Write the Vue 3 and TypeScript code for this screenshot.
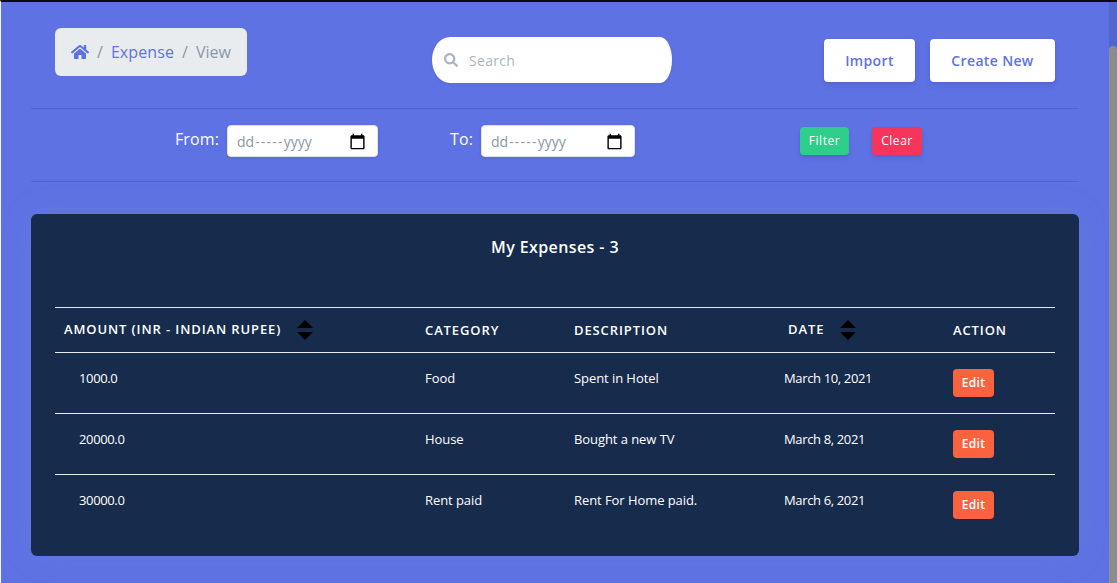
<script setup lang="ts">
interface Expense {
  amount: string
  category: string
  description: string
  date: string
}

const expenses: Expense[] = [
  { amount: '1000.0', category: 'Food', description: 'Spent in Hotel', date: 'March 10, 2021' },
  { amount: '20000.0', category: 'House', description: 'Bought a new TV', date: 'March 8, 2021' },
  { amount: '30000.0', category: 'Rent paid', description: 'Rent For Home paid.', date: 'March 6, 2021' },
]
</script>

<template>
  <div class="window">
    <main class="page">
      <header class="toolbar">
        <nav class="breadcrumb">
          <svg class="home" viewBox="0 0 576 512" aria-hidden="true">
            <path d="M280.4 148.3 96 300.1V464a16 16 0 0 0 16 16h112a16 16 0 0 0 16-16v-96a16 16 0 0 1 16-16h64a16 16 0 0 1 16 16v96a16 16 0 0 0 16 16h112a16 16 0 0 0 16-16V300L295.700 148.300a12.200 12.200 0 0 0-15.300 0zM571.600 251.500 488 182.600V44a12 12 0 0 0-12-12h-56a12 12 0 0 0-12 12v72.600L318.500 43a48 48 0 0 0-61 0L4.300 251.500a12 12 0 0 0-1.600 16.900l25.500 31a12 12 0 0 0 16.900 1.600L280.400 107.200a12.200 12.200 0 0 1 15.300 0L531 301a12 12 0 0 0 16.900-1.600l25.500-31a12 12 0 0 0-1.800-16.900z" />
          </svg>
          <span class="slash">/</span>
          <a class="crumb-link">Expense</a>
          <span class="slash">/</span>
          <span class="current">View</span>
        </nav>
        <div class="search">
          <svg class="glass" viewBox="0 0 512 512" aria-hidden="true">
            <path d="M505 442.700 405.300 343c-4.500-4.500-10.600-7-17-7H372c27.600-35.300 44-79.700 44-128C416 93.100 322.900 0 208 0S0 93.100 0 208s93.100 208 208 208c48.300 0 92.700-16.400 128-44v16.300c0 6.400 2.500 12.500 7 17l99.700 99.700c9.400 9.400 24.600 9.400 33.900 0l28.300-28.300c9.400-9.400 9.400-24.600.1-34zM208 336c-70.700 0-128-57.200-128-128 0-70.700 57.200-128 128-128 70.700 0 128 57.200 128 128 0 70.700-57.200 128-128 128z" />
          </svg>
          <span class="placeholder">Search</span>
        </div>
        <div class="actions">
          <button class="btn import">Import</button>
          <button class="btn create">Create New</button>
        </div>
      </header>

      <section class="filters">
        <label class="label from">From:</label>
        <div class="date-input first">
          <span>dd<span class="dashes">-----</span>yyyy</span>
          <svg class="calendar" viewBox="0 0 24 24" aria-hidden="true">
            <path d="M20 3h-1V1h-2v2H7V1H5v2H4c-1.100 0-2 .9-2 2v16c0 1.100.9 2 2 2h16c1.100 0 2-.9 2-2V5c0-1.100-.9-2-2-2zm0 18H4V8h16v13z" />
          </svg>
        </div>
        <label class="label to">To:</label>
        <div class="date-input last">
          <span>dd<span class="dashes">-----</span>yyyy</span>
          <svg class="calendar" viewBox="0 0 24 24" aria-hidden="true">
            <path d="M20 3h-1V1h-2v2H7V1H5v2H4c-1.100 0-2 .9-2 2v16c0 1.100.9 2 2 2h16c1.100 0 2-.9 2-2V5c0-1.100-.9-2-2-2zm0 18H4V8h16v13z" />
          </svg>
        </div>
        <button class="btn small filter">Filter</button>
        <button class="btn small clear">Clear</button>
      </section>

      <section class="card">
        <h2>My Expenses - 3</h2>
        <table>
          <colgroup>
            <col class="c-amount" />
            <col class="c-category" />
            <col class="c-description" />
            <col class="c-date" />
            <col class="c-action" />
          </colgroup>
          <thead>
            <tr>
              <th class="th-amount">
                <div class="sortable">
                  <span class="sort-label">Amount (INR - Indian Rupee)</span>
                  <svg class="sort" viewBox="0 0 16 20" aria-hidden="true"><path d="M8 0 16 8H0zM0 12H16L8 20z" /></svg>
                </div>
              </th>
              <th>Category</th>
              <th>Description</th>
              <th class="th-date">
                <div class="sortable">
                  <span class="sort-label">Date</span>
                  <svg class="sort" viewBox="0 0 16 20" aria-hidden="true"><path d="M8 0 16 8H0zM0 12H16L8 20z" /></svg>
                </div>
              </th>
              <th>Action</th>
            </tr>
          </thead>
          <tbody>
            <tr v-for="item in expenses" :key="item.date">
              <td class="numeric">{{ item.amount }}</td>
              <td>{{ item.category }}</td>
              <td>{{ item.description }}</td>
              <td class="numeric">{{ item.date }}</td>
              <td class="action"><button class="btn small edit">Edit</button></td>
            </tr>
          </tbody>
        </table>
      </section>
    </main>
    <div class="scrollbar"><div class="thumb"></div></div>
  </div>
</template>

<style>
body {
  margin: 0;
  overflow: hidden;
}
</style>

<style scoped>
* {
  box-sizing: border-box;
}

.window {
  display: flex;
  width: 1117px;
  height: 583px;
  border-top: 2px solid #0b0b10;
  border-left: 1px solid #f4f5fb;
  background: #5e72e4;
  font-family: "Open Sans", "Noto Sans", sans-serif;
  color: #fff;
}

.page {
  width: 1108px;
  padding: 0 30px;
}

.scrollbar {
  width: 8px;
  padding-top: 44px;
  background: #5366cd;
}

.thumb {
  height: 100%;
  border-radius: 4px 4px 0 0;
  background: #8c8c8c;
}

.toolbar {
  display: flex;
  align-items: flex-start;
  height: 107px;
  padding: 0 24px;
  border-bottom: 1px solid #5265cc;
}

.breadcrumb {
  display: flex;
  align-items: center;
  width: 192px;
  height: 48px;
  margin-top: 26px;
  padding-left: 16px;
  border-radius: 6px;
  background: #e9ecef;
  font-size: 16px;
  line-height: 24px;
  color: #8898aa;
}

.home {
  width: 18px;
  height: 16px;
  fill: #5e72e4;
}

.slash {
  margin: 0 8px;
}

.crumb-link {
  letter-spacing: 0.1px;
  color: #5e72e4;
}

.search {
  display: flex;
  align-items: center;
  width: 240px;
  height: 46px;
  margin: 35px 0 0 185px;
  padding-left: 12px;
  border-radius: 18px 12px 12px 18px / 23px;
  background: #fff;
  box-shadow: 0 1px 3px rgba(50, 50, 93, 0.12);
}

.glass {
  width: 14px;
  height: 14px;
  margin-top: -1px;
  fill: #adb5bd;
}

.placeholder {
  margin-left: 11px;
  font-size: 14px;
  letter-spacing: 0.3px;
  color: #adb5bd;
}

.actions {
  display: flex;
  gap: 15px;
  margin: 37px 0 0 auto;
}

.btn {
  padding: 0;
  border: 0;
  border-radius: 4px;
  background: #fff;
  box-shadow: 0 4px 6px rgba(50, 50, 93, 0.11), 0 1px 3px rgba(0, 0, 0, 0.08);
  font-family: inherit;
  font-size: 14px;
  font-weight: 600;
  letter-spacing: 0.35px;
  color: #5e72e4;
}

.import {
  width: 91px;
  height: 43px;
}

.create {
  width: 125px;
  height: 43px;
}

.filters {
  display: flex;
  align-items: flex-start;
  height: 73px;
  border-bottom: 1px solid #5265cc;
}

.label {
  margin-top: 18px;
  font-size: 16px;
  line-height: 24px;
  letter-spacing: 0.1px;
}

.from {
  width: 52px;
  margin-left: 144px;
}

.to {
  width: 31px;
  margin-left: 72px;
}

.date-input {
  display: flex;
  align-items: center;
  justify-content: space-between;
  height: 32px;
  margin-top: 16px;
  padding: 0 11px 0 9px;
  border: 1px solid #dee2e6;
  border-radius: 4px;
  background: #fff;
  box-shadow: 0 1px 3px rgba(50, 50, 93, 0.15);
  font-size: 14px;
  color: #8898aa;
}

.dashes {
  margin-left: 1px;
  letter-spacing: 1.2px;
}

.first {
  width: 151px;
}

.last {
  width: 154px;
}

.calendar {
  width: 17px;
  height: 17px;
  fill: #000;
}

.small {
  height: 28px;
  padding-bottom: 1px;
  font-size: 12px;
  color: #fff;
}

.filter {
  width: 49px;
  margin: 18px 0 0 165px;
  background: #2dce89;
  font-weight: 500;
  letter-spacing: 0.55px;
}

.clear {
  width: 50px;
  margin: 18px 0 0 23px;
  background: #f5365c;
  font-weight: 500;
  letter-spacing: 0.55px;
}

.card {
  height: 342px;
  margin-top: 32px;
  padding: 21px 24px 0;
  border-radius: 6px;
  background: #172b4d;
  box-shadow: 0 0 32px rgba(136, 152, 170, 0.15);
}

h2 {
  margin: 0;
  height: 72px;
  font-size: 16px;
  font-weight: 600;
  line-height: 24px;
  letter-spacing: 0.4px;
  text-align: center;
}

table {
  width: 1000px;
  border-collapse: separate;
  border-spacing: 0;
  table-layout: fixed;
}

.c-amount {
  width: 346px;
}

.c-category {
  width: 149px;
}

.c-description {
  width: 210px;
}

.c-date {
  width: 169px;
}

.c-action {
  width: 126px;
}

th,
td {
  padding: 0 0 0 24px;
  border-top: 1px solid #e9ecef;
  text-align: left;
  white-space: nowrap;
}

th {
  height: 45px;
  font-size: 13px;
  font-weight: 600;
  letter-spacing: 0.89px;
  text-transform: uppercase;
}

td {
  height: 61px;
  padding-top: 15px;
  font-size: 13px;
  line-height: 20px;
  letter-spacing: -0.07px;
  vertical-align: top;
}

.numeric {
  letter-spacing: -0.36px;
}

.action {
  padding-top: 16px;
}

.th-amount {
  padding-left: 9px;
}

.th-date {
  padding-left: 28px;
}

.sortable {
  display: flex;
  align-items: center;
  gap: 15.6px;
}

.sort-label {
  padding-bottom: 2px;
}

.sort {
  width: 16px;
  height: 20px;
  fill: #000;
}

.edit {
  display: block;
  width: 41px;
  background: #fb6340;
  box-shadow: none;
}
</style>
